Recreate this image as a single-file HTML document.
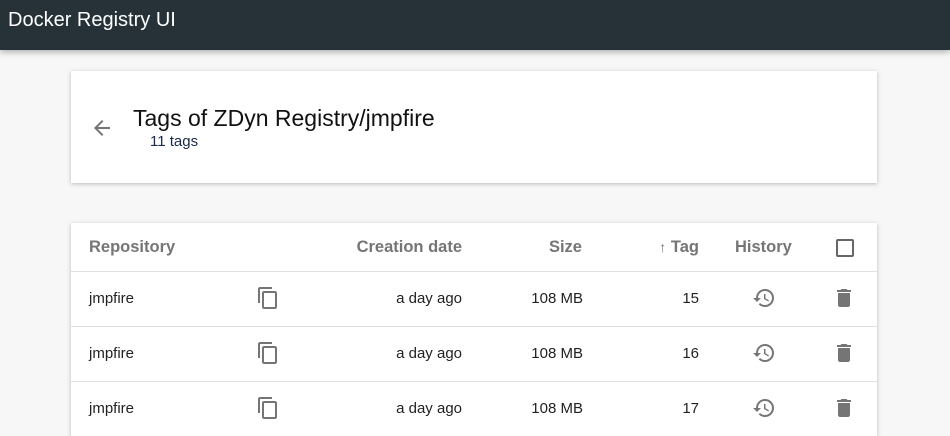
<!DOCTYPE html><html><head><style>
html,body{margin:0;width:950px;height:436px;overflow:hidden}
body{position:relative;background:#f7f7f7;font-family:"Liberation Sans",sans-serif}
.bar{position:absolute;left:0;top:0;width:950px;height:50px;background:#263238;color:#fff;font-size:20px;box-shadow:0 2px 6px rgba(0,0,0,.3)}
.bar span{position:absolute;left:8px;top:9px}
.card{position:absolute;left:71px;width:806px;background:#fff;box-shadow:0 1px 4px rgba(0,0,0,.25)}
.t{position:absolute;font-size:15px;color:#222}
.h{position:absolute;font-size:16.5px;font-weight:bold;color:#757575;top:15px}
.line{position:absolute;left:0;width:806px;height:1px;background:#e0e0e0}
svg{position:absolute}
</style></head><body>
<div class="bar"><span>Docker Registry UI</span></div>
<div class="card" style="top:71px;height:112px">
<svg style="left:19px;top:45px" width="24" height="24" viewBox="0 0 24 24"><path fill="#757575" d="M20 11H7.83l5.59-5.59L12 4l-8 8 8 8 1.41-1.41L7.83 13H20v-2z"/></svg>
<div style="position:absolute;left:62px;top:34px;font-size:23px;color:#111">Tags of ZDyn Registry/jmpfire</div>
<div style="position:absolute;left:79px;top:62px;font-size:15px;color:#1a2a4a">11 tags</div>
</div>
<div class="card" style="top:223px;height:213px">
<div class="h" style="left:18px">Repository</div>
<div class="h" style="right:415px">Creation date</div>
<div class="h" style="right:295px">Size</div>
<div class="h" style="right:178px"><span style="font-weight:normal;font-size:14px">↑</span> Tag</div>
<div class="h" style="left:664px">History</div>
<div style="position:absolute;left:765px;top:16px;width:14px;height:14px;border:2px solid #666;border-radius:2px"></div>
<div class="line" style="top:48px"></div>
<div class="line" style="top:103px"></div>
<div class="line" style="top:158px"></div>
</div>
<div id="rows"></div>
<script>
var h='';[15,16,17].forEach(function(n,i){var y=223+48+i*55;
h+='<div class="t" style="left:89px;top:'+(y+19)+'px">jmpfire</div>'+
'<svg style="left:256px;top:'+(y+15)+'px" width="24" height="24" viewBox="0 0 24 24"><path fill="#757575" d="M16 1H4c-1.1 0-2 .9-2 2v14h2V3h12V1zm3 4H8c-1.1 0-2 .9-2 2v14c0 1.1.9 2 2 2h11c1.1 0 2-.9 2-2V7c0-1.1-.9-2-2-2zm0 16H8V7h11v14z"/></svg>'+
'<div class="t" style="right:488px;top:'+(y+19)+'px">a day ago</div>'+
'<div class="t" style="right:367px;top:'+(y+19)+'px">108 MB</div>'+
'<div class="t" style="right:251px;top:'+(y+19)+'px">'+n+'</div>'+
'<svg style="left:752px;top:'+(y+15)+'px" width="24" height="24" viewBox="0 0 24 24"><path fill="#757575" d="M13 3a9 9 0 0 0-9 9H1l3.89 3.89.07.14L9 12H6c0-3.87 3.13-7 7-7s7 3.13 7 7-3.13 7-7 7c-1.93 0-3.68-.79-4.94-2.06l-1.42 1.42A8.954 8.954 0 0 0 13 21a9 9 0 0 0 0-18zm-1 5v5l4.28 2.54.72-1.21-3.5-2.08V8H12z"/></svg>'+
'<svg style="left:832px;top:'+(y+15)+'px" width="24" height="24" viewBox="0 0 24 24"><path fill="#757575" d="M6 19c0 1.1.9 2 2 2h8c1.1 0 2-.9 2-2V7H6v12zM19 4h-3.5l-1-1h-5l-1 1H5v2h14V4z"/></svg>';});
document.getElementById('rows').innerHTML=h;
</script>
</body></html>
